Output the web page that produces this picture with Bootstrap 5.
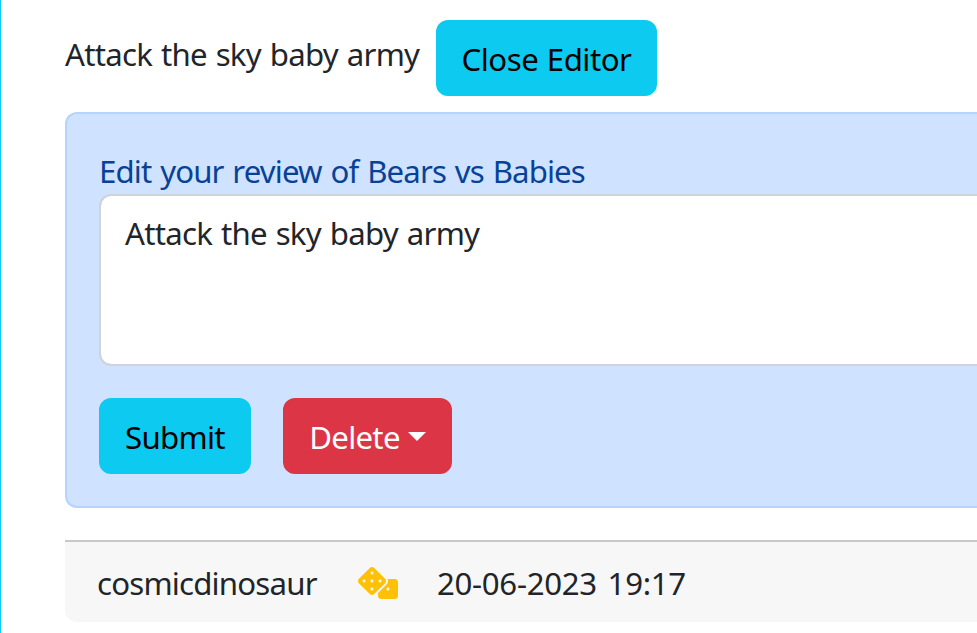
<!DOCTYPE html>
<html lang="en">
<head>
<meta charset="utf-8">
<meta name="viewport" content="width=device-width, initial-scale=1">
<title>Review editor</title>
<link href="https://cdn.jsdelivr.net/npm/bootstrap@5.3.0/dist/css/bootstrap.min.css" rel="stylesheet">
<style>
  :root { font-size: 32px; }
  body { font-family: "Noto Sans", sans-serif; }
  .review-panel { border-left: 1px solid #0dcaf0; height: 633px; padding: 20px 0 0 64px; }
  .glyphs { font-size: 31.2px; line-height: 48px; letter-spacing: -.75px; word-spacing: 1.5px; white-space: nowrap; }
  .review-text { padding-top: 10px; width: 371px; }
  .btn { --bs-btn-border-width: 2px; font-size: 31.2px; line-height: 48px; height: 76px; padding: 13px 0 11px; letter-spacing: -.5px; word-spacing: 1px; white-space: nowrap; }
  .btn-close-editor { width: 221px; }
  .btn-submit { width: 152px; letter-spacing: -.7px; }
  .btn-delete { width: 169px; letter-spacing: -.7px; }
  .review-alert { padding: 32px 0 32px 32px; border: 2px solid #b6d4fe; background: #cfe2ff; color: #084298; border-radius: 12px; }
  .review-alert label { letter-spacing: -.88px; word-spacing: 1.6px; padding-top: 1px; height: 48px; }
  .review-alert .form-control { height: 172px; resize: none; border: 2px solid #ced4da; border-radius: 12px; padding: 13px 24px 11px; overflow: hidden; }
  .btn-delete::after { margin-left: 8px; vertical-align: 8px; }
  .review-meta { background: #f7f7f7; border-top: 2px solid #c8c8c8; border-radius: 0 0 0 12px; padding: 17px 32px 15px; height: 82px; margin-top: 32px; }
  .meta-name { width: 260px; letter-spacing: -.8px; }
  .meta-icon { width: 80px; padding-left: .5px; margin-top: -1px; }
  .meta-date { letter-spacing: -.3px; word-spacing: 3px; }
</style>
</head>
<body>
<main class="review-panel">
  <div class="d-flex align-items-start">
    <span class="glyphs review-text">Attack the sky baby army</span>
    <button class="btn btn-info btn-close-editor" type="button">Close Editor</button>
  </div>
  <form class="alert alert-primary review-alert border-end-0 rounded-end-0 mt-2 mb-0">
    <label class="glyphs d-block" for="review">Edit your review of Bears vs Babies</label>
    <textarea class="form-control glyphs border-end-0 rounded-end-0" id="review" rows="3">Attack the sky baby army</textarea>
    <div class="d-flex gap-3 mt-3">
      <button class="btn btn-info btn-submit" type="button">Submit</button>
      <button class="btn btn-danger btn-delete dropdown-toggle" type="button">Delete</button>
    </div>
  </form>
  <footer class="review-meta glyphs d-flex align-items-center">
    <span class="meta-name">cosmicdinosaur</span>
    <span class="meta-icon d-flex text-warning"><svg width="40" height="32" viewBox="0 0 640 512" fill="currentColor" aria-hidden="true"><path d="M592 192H473.26c12.69 29.59 7.12 65.2-17 89.32L320 417.58V464c0 26.51 21.49 48 48 48h224c26.51 0 48-21.49 48-48V240c0-26.51-21.49-48-48-48zM480 376c-13.25 0-24-10.75-24-24 0-13.26 10.75-24 24-24s24 10.74 24 24c0 13.25-10.75 24-24 24zm-46.37-186.7L258.7 14.37c-19.16-19.16-50.23-19.16-69.39 0L14.37 189.3c-19.16 19.16-19.16 50.23 0 69.39L189.3 433.63c19.16 19.16 50.23 19.16 69.39 0L433.63 258.7c19.16-19.17 19.16-50.24 0-69.4zM96 248c-13.25 0-24-10.75-24-24 0-13.26 10.75-24 24-24s24 10.74 24 24c0 13.25-10.75 24-24 24zm128 128c-13.25 0-24-10.75-24-24 0-13.26 10.75-24 24-24s24 10.74 24 24c0 13.25-10.75 24-24 24zm0-128c-13.25 0-24-10.75-24-24 0-13.26 10.75-24 24-24s24 10.74 24 24c0 13.25-10.75 24-24 24zm0-128c-13.25 0-24-10.75-24-24 0-13.26 10.75-24 24-24s24 10.74 24 24c0 13.25-10.75 24-24 24zm128 128c-13.25 0-24-10.75-24-24 0-13.26 10.75-24 24-24s24 10.74 24 24c0 13.25-10.75 24-24 24z"/></svg></span>
    <span class="meta-date">20-06-2023 19:17</span>
  </footer>
</main>
<script src="https://cdn.jsdelivr.net/npm/bootstrap@5.3.0/dist/js/bootstrap.bundle.min.js"></script>
</body>
</html>
